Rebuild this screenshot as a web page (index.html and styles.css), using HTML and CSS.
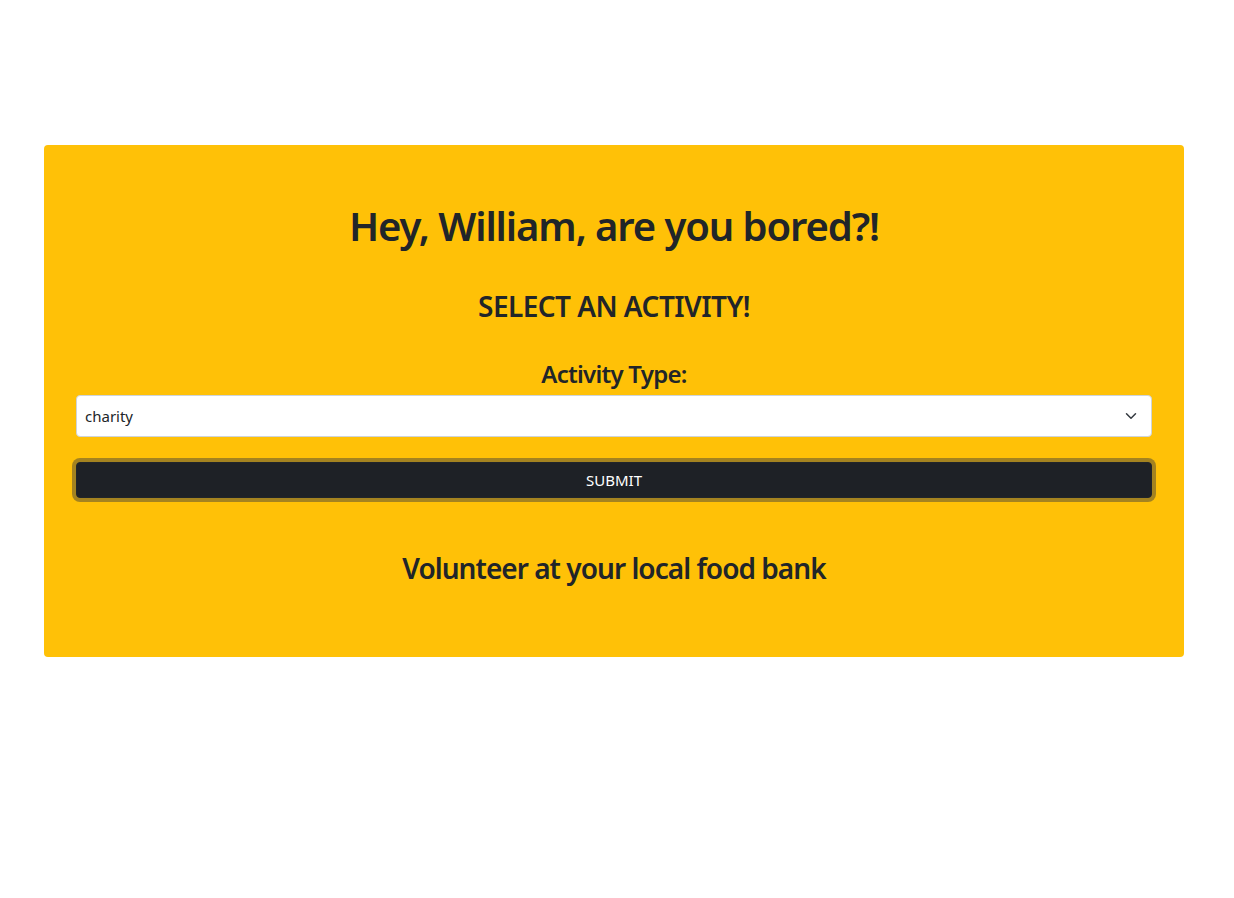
FILE: index.html
```html
<!DOCTYPE html>
<html lang="en">
<head>
<meta charset="utf-8">
<title>Bored</title>
<link rel="stylesheet" href="styles.css">
</head>
<body>
<main class="card">
  <h1 class="title">Hey, William, are you bored?!</h1>
  <h3 class="subtitle">SELECT AN ACTIVITY!</h3>
  <form class="form">
    <label class="label" for="type">Activity Type:</label>
    <div class="select">
      <span class="select-value">charity</span>
      <svg class="chevron" width="12" height="12" viewBox="0 0 16 16"><path d="M2 5l6 6 6-6" fill="none" stroke="#343a40" stroke-width="2" stroke-linecap="round" stroke-linejoin="round"/></svg>
    </div>
    <button class="btn" type="button">SUBMIT</button>
  </form>
  <h3 class="result">Volunteer at your local food bank</h3>
</main>
</body>
</html>
```
FILE: styles.css
```css
* { box-sizing: border-box; }
body {
  margin: 0;
  background: #fff;
  font-family: "Noto Sans", "Open Sans", sans-serif;
  color: #212529;
}
.card {
  margin: 145px 0 0 44px;
  width: 1140px;
  height: 512px;
  background: #ffc107;
  border-radius: 4px;
  padding: 57px 32px 0;
  text-align: center;
}
.title {
  margin: 0;
  font-size: 40px;
  font-weight: 600;
  line-height: 1.2;
  letter-spacing: -1.1px;
}
.subtitle {
  margin: 40px 0 0;
  font-size: 28px;
  font-weight: 600;
  line-height: 1.2;
  letter-spacing: -0.55px;
}
.form { margin-top: 36px; }
.label {
  display: block;
  font-size: 24px;
  font-weight: 600;
  line-height: 1.2;
  letter-spacing: -0.75px;
  margin-bottom: 7px;
}
.select {
  display: flex;
  align-items: center;
  justify-content: space-between;
  height: 42px;
  background: #fff;
  border: 1px solid #ced4da;
  border-radius: 4px;
  padding: 0 14px 0 8px;
  font-size: 15px;
  text-align: left;
}
.chevron { width: 12px; height: 12px; }
.btn {
  display: block;
  width: 100%;
  height: 36px;
  margin-top: 25px;
  background: #1e2126;
  color: #fff;
  border: 1px solid #212529;
  border-radius: 4px;
  box-shadow: 0 0 0 4px #a48320;
  font-family: inherit;
  font-size: 15px;
}
.result {
  margin: 54px 0 0;
  font-size: 28px;
  font-weight: 600;
  line-height: 1.2;
  letter-spacing: -0.97px;
}
```
